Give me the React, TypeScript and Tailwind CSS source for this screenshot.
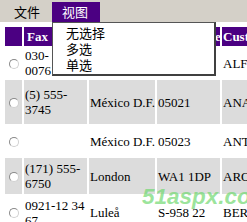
import React from 'react'

const rows = [
  { fax: ['030-', '0076'], city: '', postal: '', cust: 'ALFKI', h: 'h-[29px]', gray: false },
  { fax: ['(5) 555-', '3745'], city: 'México D.F.', postal: '05021', cust: 'ANATR', h: 'h-[44px]', gray: true },
  { fax: [], city: 'México D.F.', postal: '05023', cust: 'ANTON', h: 'h-[30px]', gray: false },
  { fax: ['(171) 555-', '6750'], city: 'London', postal: 'WA1 1DP', cust: 'AROUT', h: 'h-[36px]', gray: true },
  { fax: ['0921-12 34', '67'], city: 'Luleå', postal: 'S-958 22', cust: 'BERGS', h: 'h-[33px]', gray: false },
]

function Radio() {
  return (
    <span className="inline-block w-[10px] h-[10px] rounded-full border border-[#8a8a8a] border-r-[#d0d0d0] border-b-[#d0d0d0] bg-white" />
  )
}

export default function App() {
  return (
    <div className="relative w-[247px] h-[222px] overflow-hidden bg-white font-['Liberation_Serif',serif] text-[13px] leading-[15px] text-black">
      <div className="h-[22px] bg-[#d4d0c8] flex items-start font-['Noto_Sans_CJK_SC',sans-serif] text-[13px] leading-[17px]">
        <div className="ml-[14px] mt-[3px] w-[38px]">文件</div>
        <div className="h-[20px] mt-[2px] w-[48px] bg-[#4b0082] text-white pl-[10px] pt-[1px]">视图</div>
      </div>

      <table className="ml-[3px] mt-[3px] border-separate border-spacing-[2px] table-fixed w-[311px]">
        <colgroup>
          <col className="w-[17px]" />
          <col className="w-[63px]" />
          <col className="w-[66px]" />
          <col className="w-[63px]" />
          <col className="w-[90px]" />
        </colgroup>
        <thead>
          <tr className="h-[19px] bg-[#4b0082] text-white font-bold text-left">
            <th></th>
            <th className="pl-[3px]">Fax</th>
            <th className="pl-[1px]">City</th>
            <th className="pl-[1px] whitespace-nowrap">PostalCode</th>
            <th className="pl-[1px] whitespace-nowrap">CustomerID</th>
          </tr>
        </thead>
        <tbody>
          {rows.map((r, i) => (
            <tr key={i} className={`${r.h} ${r.gray ? 'bg-[#dcdcdc]' : 'bg-white'}`}>
              <td className="text-center align-middle pt-[2px]">
                <Radio />
              </td>
              <td className="pl-[1px] align-middle whitespace-nowrap">
                {r.fax.map((l, j) => (
                  <div key={j}>{l}</div>
                ))}
              </td>
              <td className="pl-[1px] align-middle whitespace-nowrap">{r.city}</td>
              <td className="pl-[1px] align-middle whitespace-nowrap">{r.postal}</td>
              <td className="pl-[1px] align-middle">{r.cust}</td>
            </tr>
          ))}
        </tbody>
      </table>

      <div className="absolute left-[52px] top-[22px] w-[164px] h-[54px] bg-white border border-[#555] border-r-2 border-b-2 border-r-[#404040] border-b-[#404040] font-['Noto_Sans_CJK_SC',sans-serif] text-[13px] leading-[16px] pl-[13px] pt-[2px]">
        <div>无选择</div>
        <div>多选</div>
        <div>单选</div>
      </div>

      <div className="absolute left-[142px] top-[185px] font-['Liberation_Sans',sans-serif] font-bold italic text-[22.5px] leading-[23px] text-[#6fd86f]/70">
        51aspx.com
      </div>
    </div>
  )
}
